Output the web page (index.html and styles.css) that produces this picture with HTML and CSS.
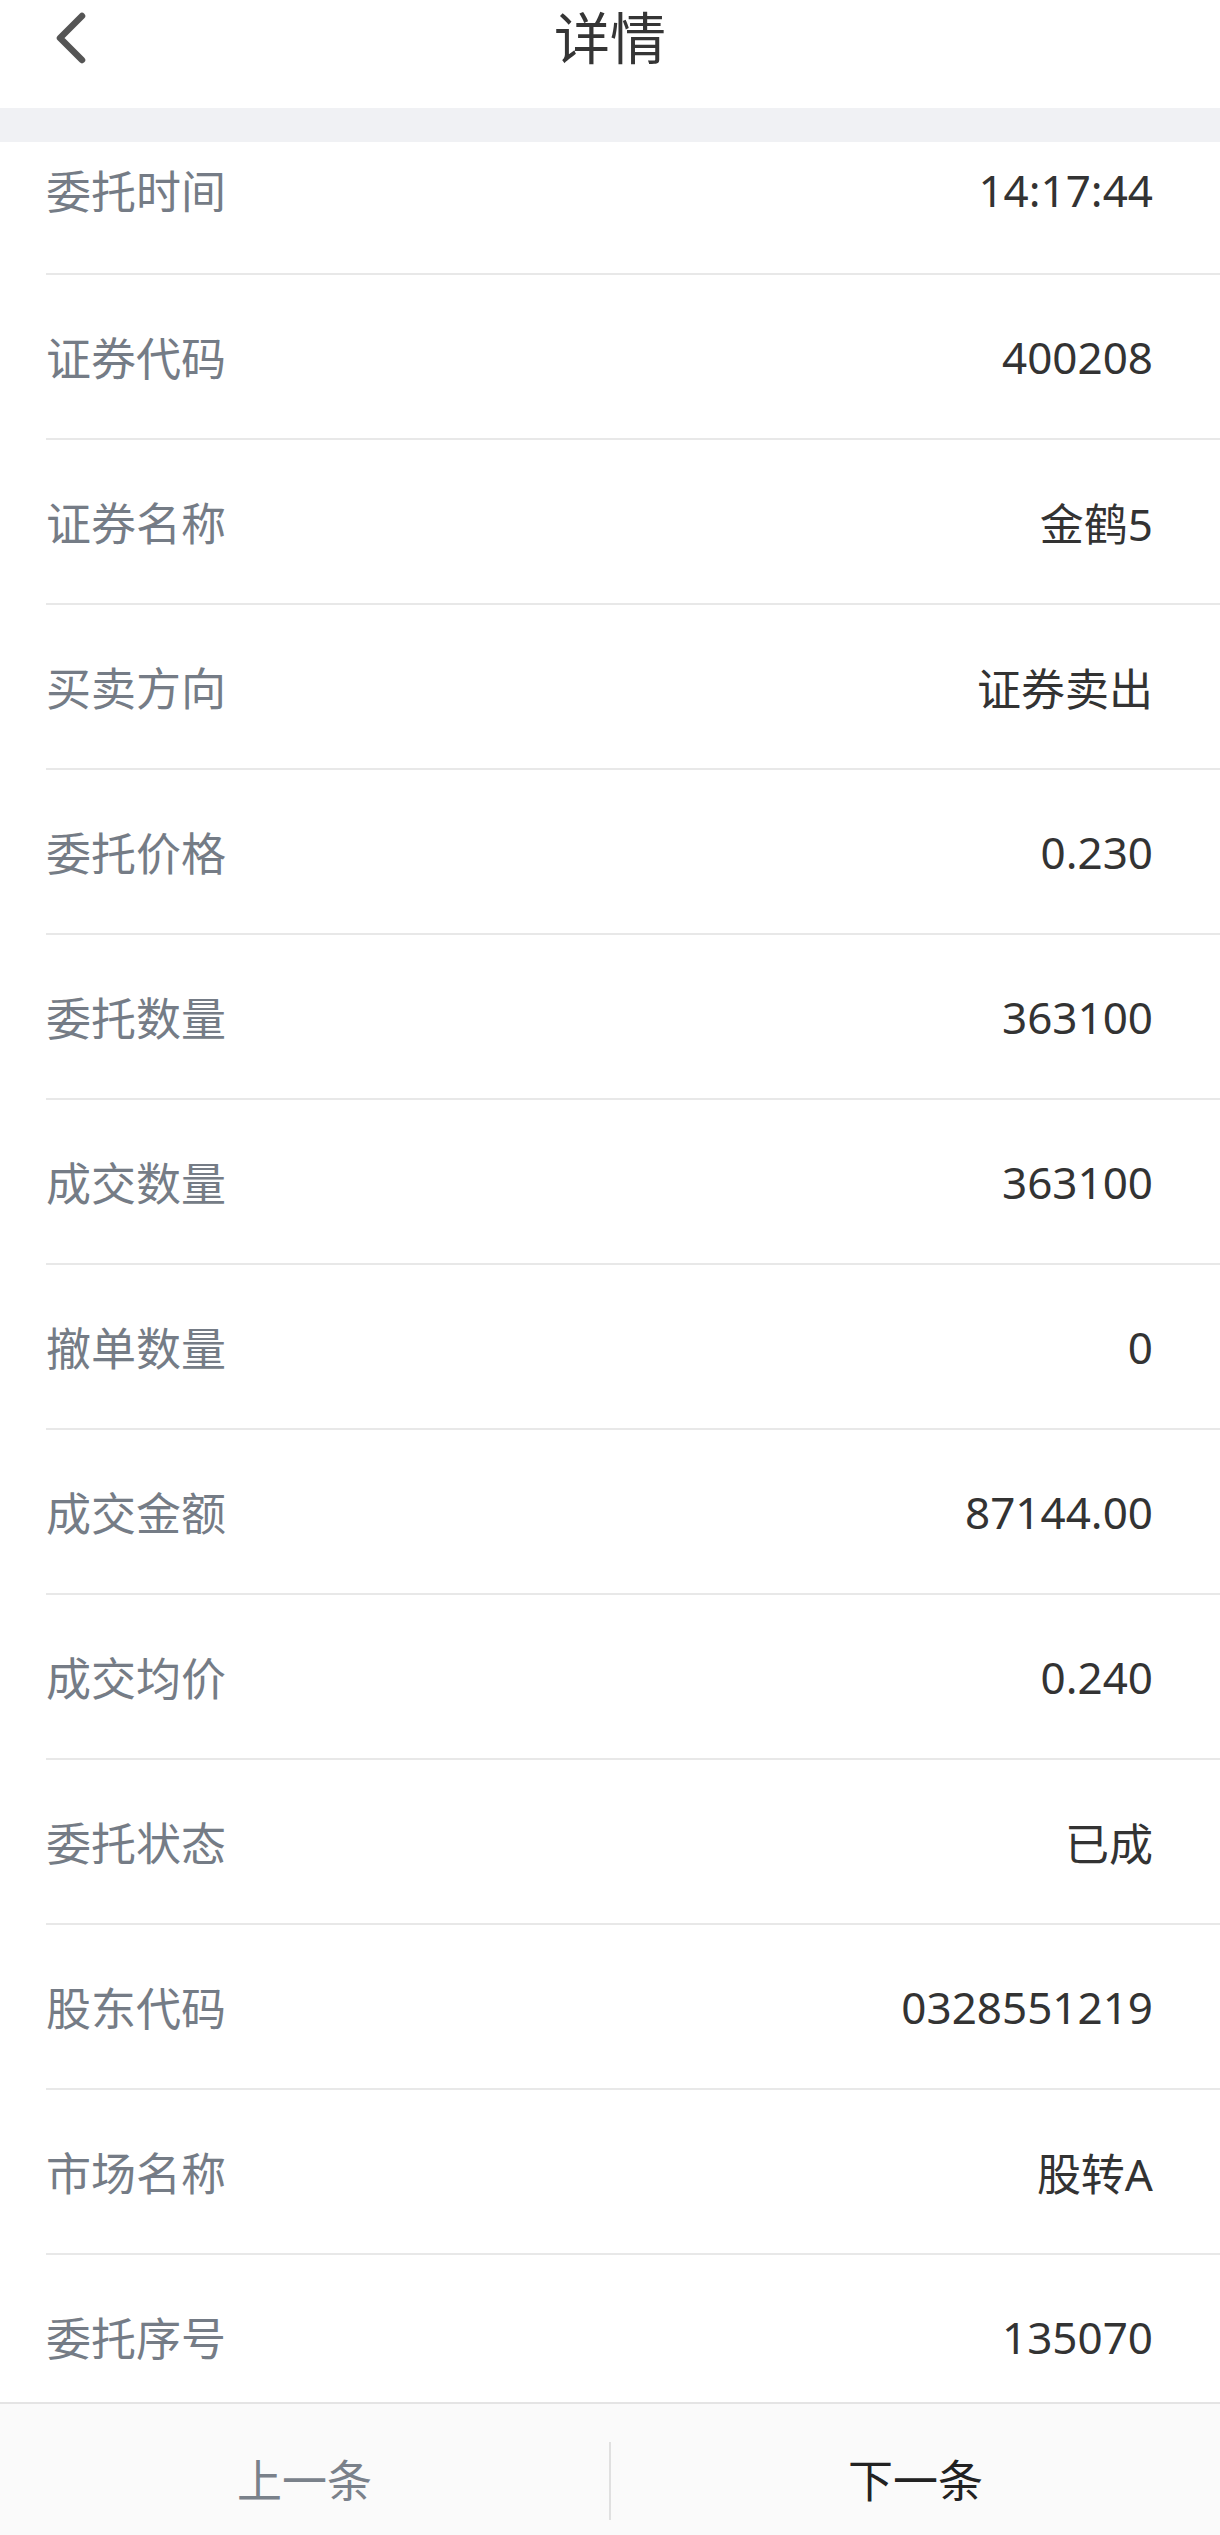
FILE: index.html
```html
<!DOCTYPE html>
<html lang="zh-CN">
<head>
<meta charset="utf-8">
<title>详情</title>
<link rel="stylesheet" href="styles.css">
</head>
<body>
<div class="app">
  <header class="header">
    <svg class="back" width="40" height="60" viewBox="0 0 40 60">
      <polyline points="26,4 4,26 26,48" fill="none" stroke="#555" stroke-width="6.5" stroke-linecap="round" stroke-linejoin="round"/>
    </svg>
    <div class="title">详情</div>
  </header>
  <div class="band"></div>
  <main class="list">
    <div class="row first"><span class="label">委托时间</span><span class="value">14:17:44</span></div>
    <div class="row"><span class="label">证券代码</span><span class="value">400208</span></div>
    <div class="row"><span class="label">证券名称</span><span class="value">金鹤5</span></div>
    <div class="row"><span class="label">买卖方向</span><span class="value">证券卖出</span></div>
    <div class="row"><span class="label">委托价格</span><span class="value">0.230</span></div>
    <div class="row"><span class="label">委托数量</span><span class="value">363100</span></div>
    <div class="row"><span class="label">成交数量</span><span class="value">363100</span></div>
    <div class="row"><span class="label">撤单数量</span><span class="value">0</span></div>
    <div class="row"><span class="label">成交金额</span><span class="value">87144.00</span></div>
    <div class="row"><span class="label">成交均价</span><span class="value">0.240</span></div>
    <div class="row"><span class="label">委托状态</span><span class="value">已成</span></div>
    <div class="row"><span class="label">股东代码</span><span class="value">0328551219</span></div>
    <div class="row"><span class="label">市场名称</span><span class="value">股转A</span></div>
    <div class="row"><span class="label">委托序号</span><span class="value">135070</span></div>
  </main>
  <footer class="footer">
    <div class="btn prev">上一条</div>
    <div class="btn next">下一条</div>
  </footer>
</div>
</body>
</html>
```
FILE: styles.css
```css
* { box-sizing: border-box; }
html, body { margin: 0; padding: 0; }
body {
  font-family: "Noto Sans", "Noto Sans CJK SC", sans-serif;
  background: #ffffff;
}
.app {
  height: 2535px;
  display: flex;
  flex-direction: column;
  overflow: hidden;
}
.header {
  height: 108px;
  flex: none;
  display: flex;
  align-items: flex-start;
  justify-content: center;
  position: relative;
  background: #ffffff;
}
.back {
  position: absolute;
  left: 56px;
  top: 12px;
}
.title {
  font-size: 56px;
  color: #353535;
  line-height: 74px;
}
.band {
  height: 34px;
  flex: none;
  background: #f0f1f4;
}
.list {
  flex: 1;
  overflow: hidden;
  padding-left: 46px;
}
.row {
  height: 165px;
  display: flex;
  align-items: center;
  justify-content: space-between;
  padding-right: 67px;
  border-bottom: 2px solid #e8e8e8;
  font-size: 45px;
}
.row.first {
  height: 133px;
  padding-bottom: 36px;
}
.label {
  color: #757c86;
}
.value {
  color: #333333;
  font-size: 44px;
}
.footer {
  height: 133px;
  flex: none;
  display: flex;
  align-items: flex-start;
  padding-top: 38px;
  background: #fafafa;
  border-top: 2px solid #e4e4e4;
}
.btn {
  flex: 1;
  height: 78px;
  line-height: 78px;
  text-align: center;
  font-size: 45px;
}
.prev { color: #7a818a; }
.next {
  color: #222222;
  border-left: 2px solid #e0e0e0;
}
```
